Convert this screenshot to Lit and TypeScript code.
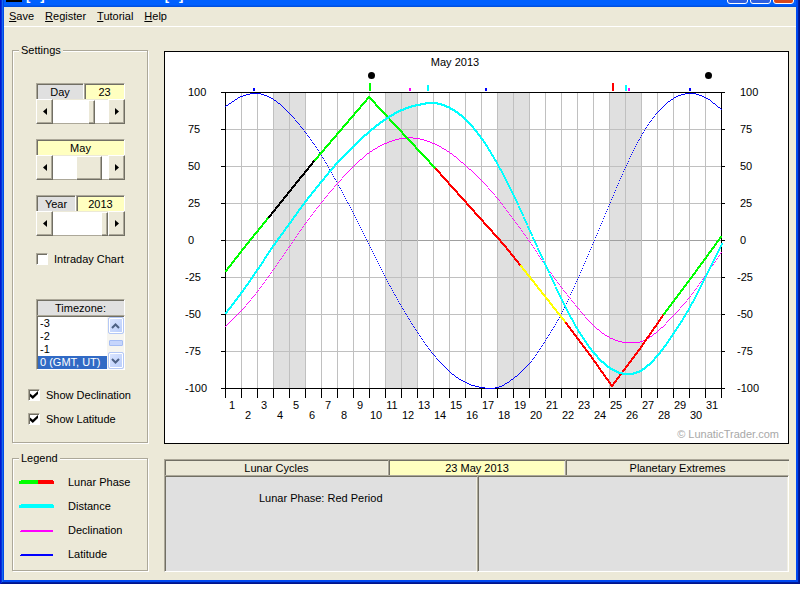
import { LitElement, html, svg, css } from "lit";
import { customElement, property } from "lit/decorators.js";

/* Chart geometry, in viewBox units */
const LEFT = 60;
const TOP = 40;
const DAY = 16;
const DAYS = 31;
const STEP = 37;
const WIDTH = DAY * DAYS;
const HEIGHT = STEP * 8;

/* One depth below the top of the plot per day boundary */
const DISTANCE = [220, 199, 176, 152, 130, 108, 88, 69, 53, 38, 26, 17, 12, 10, 15, 27, 46, 72, 103, 138, 173, 207, 237, 260, 275, 281, 277, 262, 240, 214, 183, 151];
const DECLINATION = [234, 218, 199, 177, 154, 131, 110, 91, 74, 60, 51, 46, 46, 51, 60, 73, 88, 106, 127, 149, 173, 195, 215, 233, 245, 250, 249, 239, 223, 205, 183, 160];
const LATITUDE = [14, 4, 1, 7, 21, 40, 63, 91, 121, 153, 185, 214, 240, 262, 279, 290, 295, 295, 286, 271, 248, 221, 187, 150, 112, 75, 43, 20, 6, 1, 5, 17];

const PHASES: { color: string; points: [number, number][] }[] = [
  { color: "#00ff00", points: [[0, 178], [21, 151], [43, 124]] },
  { color: "#000000", points: [[43, 124], [67, 94], [89, 67]] },
  { color: "#00ff00", points: [[89, 67], [143, 4], [210, 76]] },
  { color: "#ff0000", points: [[210, 76], [279, 153], [295, 173]] },
  { color: "#ffff00", points: [[295, 173], [340, 230]] },
  { color: "#ff0000", points: [[340, 230], [364, 262], [386, 293], [413, 257], [438, 221]] },
  { color: "#00ff00", points: [[438, 221], [465, 185], [495, 144]] },
];

const MARKS = [
  { x: 28, h: 3, color: "#0000ff" },
  { x: 144, h: 8, color: "#00ff00" },
  { x: 184, h: 3, color: "#ff00ff" },
  { x: 202, h: 6, color: "#00ffff" },
  { x: 260, h: 3, color: "#0000ff" },
  { x: 387, h: 8, color: "#ff0000" },
  { x: 400, h: 6, color: "#00ffff" },
  { x: 403, h: 3, color: "#ff00ff" },
  { x: 464, h: 3, color: "#0000ff" },
];

const dot = (x: number, y: number, s: number) =>
  `M${LEFT + x} ${TOP + Math.round(y)}h${s}v${s}h-${s}z`;

/* Plots a daily series as one square dot per column, eased between days */
function dots(values: number[], size: number): string {
  let d = "";
  for (let x = 0; x <= WIDTH; x++) {
    const i = Math.min(Math.floor(x / DAY), DAYS - 1);
    const t = x / DAY - i;
    const a = values[i];
    const b = values[i + 1];
    const before = i > 0 ? values[i - 1] : 2 * a - b;
    const after = i + 2 < values.length ? values[i + 2] : 2 * b - a;
    const m0 = (b - before) / 2;
    const m1 = (after - a) / 2;
    const y =
      (2 * t ** 3 - 3 * t ** 2 + 1) * a + (t ** 3 - 2 * t ** 2 + t) * m0 +
      (3 * t ** 2 - 2 * t ** 3) * b + (t ** 3 - t ** 2) * m1;
    d += dot(x, y, size);
  }
  return d;
}

function straight(points: [number, number][], size: number): string {
  let d = "";
  for (let k = 1; k < points.length; k++) {
    const [x0, y0] = points[k - 1];
    const [x1, y1] = points[k];
    for (let x = x0; x <= x1; x++) d += dot(x, y0 + ((y1 - y0) * (x - x0)) / (x1 - x0), size);
  }
  return d;
}

@customElement("moon-chart")
class MoonChart extends LitElement {
  static styles = css`
    :host { display: block; border: 1px solid #000; background: #fff; }
    svg { display: block; width: 100%; height: auto; }
    text { font: 11px "Liberation Sans", Arial, sans-serif; fill: #000; }
    .mid { text-anchor: middle; }
    .credit { fill: #a8a8a8; text-anchor: end; }
    .crisp { shape-rendering: crispEdges; }
    .grid { stroke: #c0c0c0; }
    .zero { stroke: #a0a0a0; }
    .axis { stroke: #000; }
    .weekend { fill: #e0e0e0; }
  `;

  render() {
    const rows = Array.from({ length: 9 }, (_, i) => i);
    const cols = Array.from({ length: DAYS + 1 }, (_, i) => i);
    const x = (v: number) => LEFT + v + 0.5;
    const y = (v: number) => TOP + v + 0.5;
    return html`
      <svg viewBox="0 0 623 391" role="img" aria-label="Lunar cycles for May 2013">
        <g class="crisp">
          ${[3, 10, 17, 24].map((d) => svg`<rect class="weekend" x=${LEFT + d * DAY} y=${TOP} width=${DAY * 2} height=${HEIGHT}></rect>`)}
          ${rows.map((r) => svg`<line class=${r === 4 ? "zero" : "grid"} x1=${LEFT} x2=${LEFT + WIDTH} y1=${y(r * STEP)} y2=${y(r * STEP)}></line>`)}
          ${cols.map((c) => svg`<line class="grid" x1=${x(c * DAY)} x2=${x(c * DAY)} y1=${TOP} y2=${TOP + HEIGHT}></line>`)}
          ${rows.map((r) => svg`
            <line class="axis" x1=${LEFT - 4} x2=${LEFT} y1=${y(r * STEP)} y2=${y(r * STEP)}></line>
            <line class="axis" x1=${LEFT + WIDTH} x2=${LEFT + WIDTH + 4} y1=${y(r * STEP)} y2=${y(r * STEP)}></line>`)}
          ${cols.map((c) => svg`<line class="axis" x1=${x(c * DAY)} x2=${x(c * DAY)} y1=${TOP + HEIGHT} y2=${TOP + HEIGHT + 10}></line>`)}
          <path class="axis" fill="none" d="M${x(0)} ${y(0)}H${x(WIDTH)}V${y(HEIGHT)}H${x(0)}Z"></path>
          ${MARKS.map((m) => svg`<rect x=${LEFT + m.x} y=${TOP - 1 - m.h} width="2" height=${m.h} fill=${m.color}></rect>`)}
          <path fill="#0000ff" d=${dots(LATITUDE, 1)}></path>
          <path fill="#ff00ff" d=${dots(DECLINATION, 1)}></path>
          ${PHASES.map((p) => svg`<path fill=${p.color} d=${straight(p.points, 2)}></path>`)}
          <path fill="#00ffff" d=${dots(DISTANCE, 2)}></path>
        </g>
        <circle cx="206.5" cy="23.5" r="3.5"></circle>
        <circle cx="543.5" cy="23.5" r="3.5"></circle>
        <text class="mid" x="290" y="14">May 2013</text>
        ${rows.map((r) => {
          const v = 100 - r * 25;
          const inset = v < 0 ? 3 : 0;
          return svg`
            <text x=${23 - inset} y=${TOP + 4 + r * STEP}>${v}</text>
            <text x=${575 - inset} y=${TOP + 4 + r * STEP}>${v}</text>`;
        })}
        ${cols.slice(1).map((d) => svg`<text class="mid" x=${LEFT + d * DAY - 9} y=${d % 2 ? 357 : 367}>${d}</text>`)}
        <text class="credit" x="614" y="386">© LunaticTrader.com</text>
      </svg>
    `;
  }
}

@customElement("date-scroller")
class DateScroller extends LitElement {
  @property() label = "";
  @property() text = "";
  @property({ type: Number }) min = 0;
  @property({ type: Number }) max = 100;
  @property({ type: Number }) value = 0;
  @property({ type: Boolean }) wide = false;

  static styles = css`
    :host { display: block; min-width: 0; font: 11px "Liberation Sans", Arial, sans-serif; }
    .head { display: flex; height: 16px; }
    .cell {
      box-sizing: border-box; line-height: 14px; text-align: center; background: #e0e0e0;
      width: var(--label-width, 50%);
      border: solid; border-width: 1px 1px 0 1px; border-color: #aca899 #fff #fff #aca899;
      box-shadow: inset 1px 1px #716f64;
      padding-top: 1px;
    }
    .value { background: #ffffc0; flex: 1; }
    .bar { display: flex; height: 25px; }
    button {
      flex: none; box-sizing: border-box; width: 17px; padding: 0; background: #ece9d8;
      border: 1px solid; border-color: #fff #716f64 #716f64 #fff;
      box-shadow: inset -1px -1px #aca899;
    }
    button svg { display: block; margin: auto; }
    input {
      appearance: none; flex: 1; width: 0; min-width: 0; height: 25px; margin: 0; background: #fff;
      box-sizing: border-box; border-bottom: 1px solid #aca899;
      border-top: 1px solid #ece9d8;
    }
    input::-webkit-slider-thumb {
      appearance: none; box-sizing: border-box; width: 7px; height: 24px; background: #ece9d8;
      border: 1px solid; border-color: #fff #716f64 #716f64 #fff; box-shadow: inset -1px -1px #aca899;
    }
    .wide::-webkit-slider-thumb { width: 26px; }
  `;

  render() {
    return html`
      <div class="head">
        ${this.label ? html`<label class="cell" for="range">${this.label}</label>` : ""}
        <output class="cell value" for="range">${this.text}</output>
      </div>
      <div class="bar">
        <button type="button" aria-label="Previous">
          <svg width="4" height="7" viewBox="0 0 4 7"><path d="M4 0v7L0 3.5z"></path></svg>
        </button>
        <input id="range" class=${this.wide ? "wide" : ""} type="range" aria-label=${this.label || "Month"}
          min=${this.min} max=${this.max} .value=${String(this.value)} />
        <button type="button" aria-label="Next">
          <svg width="4" height="7" viewBox="0 0 4 7"><path d="M0 0v7l4-3.5z"></path></svg>
        </button>
      </div>
    `;
  }
}

@customElement("app-root")
class AppRoot extends LitElement {
  static styles = css`
    :host { display: block; font: 11px/14px "Liberation Sans", Arial, sans-serif; color: #000; background: #fff; }
    .window {
      background: #ece9d8;
      border: solid; border-width: 0 4px 4px; border-color: #0048e8 #0038d0 #0028b8 #0048e8;
      position: relative;
    }
    .edge {
      position: absolute; inset: 0 -4px -4px; pointer-events: none;
      box-shadow: inset 1px 0 #0019cf, inset -1px -1px #00138c, inset 2px 0 #0831d9, inset -2px -2px #001ea0, inset 3px 0 #166aee, inset -4px -4px #0048f0;
    }
    .title {
      display: flex; align-items: flex-end; height: 7px; overflow: hidden; box-sizing: border-box;
      padding: 0 2px 3px; margin: 0;
      background: linear-gradient(#0060ff 0 5px, #0050e0 6px 7px);
    }
    .app-icon { width: 16px; height: 16px; background: #000; margin-bottom: 2px; }
    .caption { display: flex; margin: 0 auto 2px 4px; color: #fff; font: bold 13px/13px "Liberation Sans", Arial, sans-serif; gap: 120px; }
    .pair { display: flex; gap: 10px; }
    .controls { display: flex; gap: 2px; }
    .control {
      box-sizing: border-box; width: 21px; height: 21px; padding: 0;
      border: 1px solid #fff; border-radius: 3px; background: #2e60e0;
    }
    .close { background: #d8481c; }
    .menu { display: flex; gap: 11px; height: 20px; box-sizing: border-box; padding: 2px 5px 3px; border-bottom: 1px solid #fff; }
    .menu button { border: 0; background: none; padding: 0; font: inherit; color: inherit; }
    .main {
      display: grid; grid-template-columns: 136px minmax(0, 1fr); column-gap: 16px;
      padding: 17px 7px 8px 8px;
    }
    .side { display: flex; flex-direction: column; gap: 9px; }
    fieldset {
      margin: 0; min-width: 0; border: 1px solid #aca899;
      box-shadow: 1px 1px #fff, inset 1px 1px #fff;
      box-sizing: border-box;
    }
    legend { line-height: 12px; padding: 0 2px; margin-left: 6px; background: #ece9d8; }
    .settings { padding: 27px 22px 15px 23px; }
    .settings legend { margin-left: -17px; }
    .stack { display: grid; grid-template-columns: minmax(0, 1fr); gap: 15px; }
    .day { --label-width: 48px; }
    .year { --label-width: 40px; }
    .check { display: flex; align-items: center; gap: 6px; height: 16px; white-space: nowrap; }
    .check input {
      appearance: none; box-sizing: border-box; flex: none; width: 12px; height: 12px; margin: 0; background: #fff;
      border: 1px solid; border-color: #aca899 #fff #fff #aca899; box-shadow: inset 1px 1px #716f64;
      display: grid; place-items: center;
    }
    .check input:checked::before {
      content: ""; width: 8px; height: 8px; background: #000;
      clip-path: polygon(0 30%, 35% 60%, 100% 0, 100% 38%, 35% 100%, 0 68%);
    }
    .zone { margin-top: 32px; }
    .zone-head {
      display: block; height: 16px; box-sizing: border-box; padding-top: 1px; line-height: 14px; text-align: center; background: #e0e0e0;
      border: solid; border-width: 1px 1px 0; border-color: #aca899 #fff #fff #aca899;
      box-shadow: inset 1px 1px #716f64;
    }
    .zone-list {
      display: flex; height: 55px; box-sizing: border-box; background: #fff;
      border: 1px solid; border-color: #aca899 #fff #fff #aca899;
      box-shadow: inset 1px 1px #716f64; padding: 1px 0 0 1px;
    }
    select {
      flex: 1; min-width: 0; height: 52px; border: 0; border-radius: 0; outline: 0; padding: 0; margin: 0;
      font: inherit; background: #fff; overflow: hidden; color: #000; scrollbar-width: none;
    }
    option { height: 13px; min-height: 13px; line-height: 13px; padding: 0 0 0 2px; box-sizing: border-box; }
    option:checked { background: linear-gradient(#316ac5, #316ac5); color: #fff; }
    .scroll { display: flex; flex-direction: column; align-items: center; justify-content: space-between; width: 17px; background: #f6f5f0; }
    .scroll button {
      width: 16px; height: 17px; padding: 0; border: 1px solid #b4c8f6; border-radius: 2px;
      background: linear-gradient(135deg, #dce6ff, #b8ccfa); box-shadow: inset 0 0 0 1px #fff;
    }
    .scroll svg { display: block; margin: auto; }
    .thumb { width: 14px; height: 6px; background: #c6d5fc; border: 1px solid #a4bcf4; border-radius: 1px; box-sizing: border-box; }
    .shows { display: grid; gap: 8px; margin: 17px 0 0 -8px; }
    .legend { padding: 11px 6px 9px; }
    .legend legend { margin-left: 0; }
    .keys { display: grid; gap: 10px; list-style: none; margin: 0; padding: 0; }
    .keys li { display: flex; align-items: center; gap: 14px; }
    .content { display: flex; flex-direction: column; padding-top: 7px; }
    .heads { display: flex; margin-top: 15px; }
    .head, .panel {
      box-sizing: border-box; border: solid; border-color: #aca899 #fff #fff #aca899;
      box-shadow: inset 1px 1px #716f64, inset -1px 0 #f1efe2; text-align: center;
    }
    .head { height: 16px; border-width: 1px 0 0 1px; padding-top: 1px; flex: 224 1 0; }
    .date { background: #ffffc0; flex: 177 1 0; }
    .panels { display: grid; grid-template-columns: 1fr 1fr; flex: 1; }
    .panel { background: #e0e0e0; min-height: 97px; border-width: 1px 0 1px 1px; padding: 15px 8px; }
    .panel:last-child { border-right-width: 1px; }
    .panel p { margin: 0; }
  `;

  private check(id: string, label: string, on: boolean) {
    return html`<div class="check"><input id=${id} type="checkbox" .checked=${on} /><label for=${id}>${label}</label></div>`;
  }

  private key(label: string, colors: string[], thick: number) {
    return html`<li>
      <svg width="35" height="14" viewBox="0 0 35 14" aria-hidden="true">
        ${thick > 2
          ? svg`
            <path fill=${colors[0]} d="M0 6h2V5h17v4H0z"></path>
            <path fill=${colors[colors.length - 1]} d="M19 5h15v1h1v3H19z"></path>`
          : svg`<path fill=${colors[0]} d="M1 8h1V7h32v2H1z"></path>`}
      </svg>
      <span>${label}</span>
    </li>`;
  }

  render() {
    return html`
      <div class="window">
        <header class="title">
          <span class="app-icon"></span>
          <div class="caption">
            <span class="pair"><span>[</span><span>]</span></span>
            <span class="pair"><span>[</span><span>]</span></span>
          </div>
          <div class="controls">
            <button class="control" type="button" aria-label="Minimize"></button>
            <button class="control" type="button" aria-label="Maximize"></button>
            <button class="control close" type="button" aria-label="Close"></button>
          </div>
        </header>
        <nav class="menu">
          <button type="button"><u>S</u>ave</button>
          <button type="button"><u>R</u>egister</button>
          <button type="button"><u>T</u>utorial</button>
          <button type="button"><u>H</u>elp</button>
        </nav>
        <main class="main">
          <div class="side">
            <fieldset class="settings">
              <legend>Settings</legend>
              <div class="stack">
                <date-scroller class="day" label="Day" text="23" min="1" max="31" value="23"></date-scroller>
                <date-scroller text="May" wide min="1" max="6" value="5"></date-scroller>
                <date-scroller class="year" label="Year" text="2013" min="1900" max="2013" value="2013"></date-scroller>
                ${this.check("intraday", "Intraday Chart", false)}
              </div>
              <div class="zone">
                <label class="zone-head" for="zone">Timezone:</label>
                <div class="zone-list">
                  <select id="zone" size="4">
                    <option>-3</option>
                    <option>-2</option>
                    <option>-1</option>
                    <option selected>0 (GMT, UT)</option>
                  </select>
                  <div class="scroll">
                    <button type="button" aria-label="Scroll up">
                      <svg width="9" height="6" viewBox="0 0 9 6"><path d="M1 5l3.500-3.500L8 5" fill="none" stroke="#4d6185" stroke-width="2"></path></svg>
                    </button>
                    <span class="thumb"></span>
                    <button type="button" aria-label="Scroll down">
                      <svg width="9" height="6" viewBox="0 0 9 6"><path d="M1 1l3.500 3.500L8 1" fill="none" stroke="#4d6185" stroke-width="2"></path></svg>
                    </button>
                  </div>
                </div>
              </div>
              <div class="shows">
                ${this.check("declination", "Show Declination", true)}
                ${this.check("latitude", "Show Latitude", true)}
              </div>
            </fieldset>
            <fieldset class="legend">
              <legend>Legend</legend>
              <ul class="keys">
                ${this.key("Lunar Phase", ["#00ff00", "#ff0000"], 4)}
                ${this.key("Distance", ["#00ffff"], 4)}
                ${this.key("Declination", ["#ff00ff"], 2)}
                ${this.key("Latitude", ["#0000ff"], 2)}
              </ul>
            </fieldset>
          </div>
          <div class="content">
            <moon-chart></moon-chart>
            <div class="heads">
              <div class="head">Lunar Cycles</div>
              <div class="head date">23 May 2013</div>
              <div class="head">Planetary Extremes</div>
            </div>
            <div class="panels">
              <section class="panel"><p>Lunar Phase: Red Period</p></section>
              <section class="panel"></section>
            </div>
          </div>
        </main>
        <div class="edge"></div>
      </div>
    `;
  }
}
